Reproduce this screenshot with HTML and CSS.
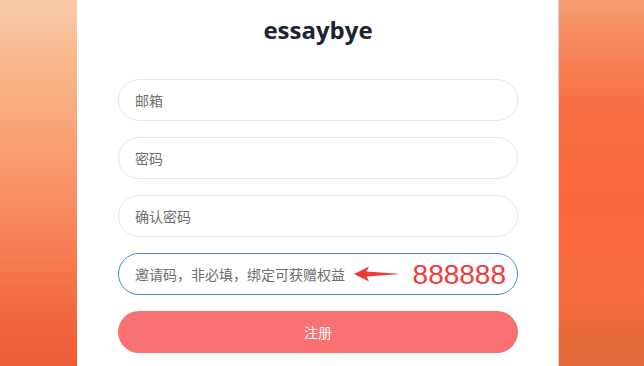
FILE: index.html
```html
<!DOCTYPE html>
<html lang="zh">
<head>
<meta charset="utf-8">
<title>essaybye</title>
<link rel="stylesheet" href="styles.css">
</head>
<body>
<div class="page">
  <main class="card">
    <h1 class="title">essaybye</h1>
    <form class="form">
      <div class="field"><input class="input" type="email" placeholder="邮箱"></div>
      <div class="field"><input class="input" type="password" placeholder="密码"></div>
      <div class="field"><input class="input" type="password" placeholder="确认密码"></div>
      <div class="field field-invite">
        <input class="input input-focus" type="text" placeholder="邀请码，非必填，绑定可获赠权益">
        <div class="hint">
          <svg class="arrow" width="44" height="16" viewBox="0 0 44 16"><polygon points="0,8 15,0.5 12.5,5.4 44,7.8 44,8.2 12.5,10.6 15,15.5" fill="#f03a3a"/></svg>
          <span class="code">888888</span>
        </div>
      </div>
      <button class="submit" type="button">注册</button>
    </form>
  </main>
</div>
</body>
</html>
```

FILE: styles.css
```css
html, body {
  margin: 0;
  padding: 0;
  height: 100%;
  overflow: hidden;
}
body {
  font-family: "Noto Sans CJK SC", "Noto Sans", sans-serif;
  background-color: #f46a42;
  background-image:
    linear-gradient(to bottom, #f9cba9 0%, #f9b587 20%, #f99a6c 45%, #f67c52 70%, #f0643d 88%, #ec5c37 100%),
    linear-gradient(to bottom, #f59c6d 0%, #f7845a 15%, #f86c43 30%, #f9663e 55%, #f96a42 80%, #e5683a 92%, #e2693b 100%);
  background-size: 77px 100%, 100% 100%;
  background-position: left top, left top;
  background-repeat: no-repeat, no-repeat;
}
.page {
  display: flex;
  height: 100%;
  padding-left: 77px;
  box-sizing: border-box;
}
.card {
  width: 481px;
  height: 100%;
  background: #ffffff;
  box-shadow: 1px 0 0 #d6d6d6;
  padding: 14px 40px 0 41px;
  box-sizing: border-box;
}
.title {
  margin: 0;
  text-align: center;
  font-family: "Open Sans", "Noto Sans", sans-serif;
  font-weight: 700;
  font-size: 24px;
  line-height: 32px;
  color: #1e2433;
}
.form {
  margin-top: 33px;
  display: flex;
  flex-direction: column;
  gap: 16px;
}
.field {
  position: relative;
}
.input {
  display: block;
  width: 100%;
  height: 42px;
  box-sizing: border-box;
  border: 1px solid #e5e7eb;
  border-radius: 21px;
  padding: 0 16px;
  font-family: "Noto Sans CJK SC", sans-serif;
  font-size: 14px;
  color: #333;
  background: #fff;
  outline: none;
}
.input::placeholder {
  color: #6e6e6e;
}
.input-focus {
  border-color: #4a86e8;
}
.hint {
  position: absolute;
  right: 12px;
  top: 0;
  height: 42px;
  display: flex;
  align-items: center;
  gap: 15px;
  pointer-events: none;
}
.arrow {
  display: block;
}
.code {
  font-family: "Liberation Sans", sans-serif;
  font-size: 28px;
  line-height: 1;
  color: #f23c3c;
  margin-top: 2px;
}
.submit {
  height: 42px;
  border: none;
  border-radius: 21px;
  background: #f87171;
  color: #ffffff;
  font-family: "Noto Sans CJK SC", sans-serif;
  font-size: 14px;
}
```
